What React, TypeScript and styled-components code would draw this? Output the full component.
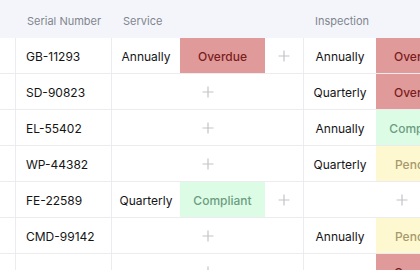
import styled, { createGlobalStyle } from "styled-components";

const GlobalStyle = createGlobalStyle`
  body {
    margin: 0;
    background: #ffffff;
    font-family: Inter, "Noto Sans", sans-serif;
    overflow: hidden;
  }
`;

type Status = "Overdue" | "Compliant" | "Pending";

type Check = {
  interval: string;
  status: Status;
} | null;

type Asset = {
  serial: string;
  service: Check;
  inspection: Check;
};

const assets: Asset[] = [
  { serial: "GB-11293", service: { interval: "Annually", status: "Overdue" }, inspection: { interval: "Annually", status: "Overdue" } },
  { serial: "SD-90823", service: null, inspection: { interval: "Quarterly", status: "Overdue" } },
  { serial: "EL-55402", service: null, inspection: { interval: "Annually", status: "Compliant" } },
  { serial: "WP-44382", service: null, inspection: { interval: "Quarterly", status: "Pending" } },
  { serial: "FE-22589", service: { interval: "Quarterly", status: "Compliant" }, inspection: null },
  { serial: "CMD-99142", service: null, inspection: { interval: "Annually", status: "Pending" } },
  { serial: "", service: null, inspection: { interval: "", status: "Overdue" } },
];

const palette: Record<Status, { bg: string; fg: string }> = {
  Overdue: { bg: "#e09a9a", fg: "#7a1d1d" },
  Compliant: { bg: "#dcfce6", fg: "#6c9d80" },
  Pending: { bg: "#fef8d0", fg: "#a8996c" },
};

const Wrapper = styled.div`
  width: 420px;
  height: 270px;
  overflow: hidden;
`;

const Grid = styled.div`
  display: grid;
  grid-template-columns: 16px 96px 192px 196px;
  width: max-content;
`;

const HeadCell = styled.div`
  height: 38px;
  box-sizing: border-box;
  display: flex;
  align-items: center;
  padding: 4px 0 0 11px;
  background: #f4f5fa;
  color: #80858e;
  font-size: 11px;
`;

const Cell = styled.div<{ $last?: boolean }>`
  height: 35px;
  border-bottom: 1px solid #ececee;
  border-right: ${(p) => (p.$last ? "none" : "1px solid #ececee")};
  display: flex;
  align-items: center;
`;

const SerialCell = styled(Cell)`
  padding: 2px 0 0 10px;
  box-sizing: border-box;
  height: 36px;
  font-size: 12px;
  color: #151515;
`;

const Group = styled(Cell)<{ $interval: number }>`
  display: grid;
  grid-template-columns: ${(p) => p.$interval}px 85px 1fr;
  align-items: stretch;
  height: 36px;
  border-bottom: none;
`;

const GroupRow = styled.div`
  display: contents;
`;

const Interval = styled.div`
  display: flex;
  align-items: center;
  justify-content: center;
  padding-top: 2px;
  font-size: 12px;
  color: #151515;
  border-bottom: 1px solid #ececee;
`;

const Badge = styled.div<{ $status: Status }>`
  display: flex;
  align-items: center;
  justify-content: center;
  padding-top: 2px;
  font-size: 12px;
  font-weight: 500;
  background: ${(p) => palette[p.$status].bg};
  color: ${(p) => palette[p.$status].fg};
  border-bottom: 1px solid #ececee;
`;

const AddSlot = styled.div<{ $wide?: boolean }>`
  grid-column: ${(p) => (p.$wide ? "1 / -1" : "auto")};
  display: flex;
  align-items: center;
  justify-content: center;
  border-bottom: 1px solid #ececee;
`;

function Plus() {
  return (
    <svg width="12" height="12" viewBox="0 0 12 12">
      <path d="M6 0.5v11M0.5 6h11" stroke="#c4c4c8" strokeWidth="1.2" fill="none" />
    </svg>
  );
}

function CheckCell({ check, interval, last }: { check: Check; interval: number; last?: boolean }) {
  return (
    <Group $interval={interval} $last={last}>
      {check ? (
        <GroupRow>
          <Interval>{check.interval}</Interval>
          <Badge $status={check.status}>{check.status}</Badge>
          <AddSlot>
            <Plus />
          </AddSlot>
        </GroupRow>
      ) : (
        <AddSlot $wide>
          <Plus />
        </AddSlot>
      )}
    </Group>
  );
}

function App() {
  return (
    <Wrapper>
      <GlobalStyle />
      <Grid>
        <HeadCell />
        <HeadCell>Serial Number</HeadCell>
        <HeadCell>Service</HeadCell>
        <HeadCell>Inspection</HeadCell>
        {assets.map((a, i) => (
          <GroupRow key={i}>
            <Cell />
            <SerialCell>{a.serial}</SerialCell>
            <CheckCell check={a.service} interval={68} />
            <CheckCell check={a.inspection} interval={72} />
          </GroupRow>
        ))}
      </Grid>
    </Wrapper>
  );
}

export default App;
